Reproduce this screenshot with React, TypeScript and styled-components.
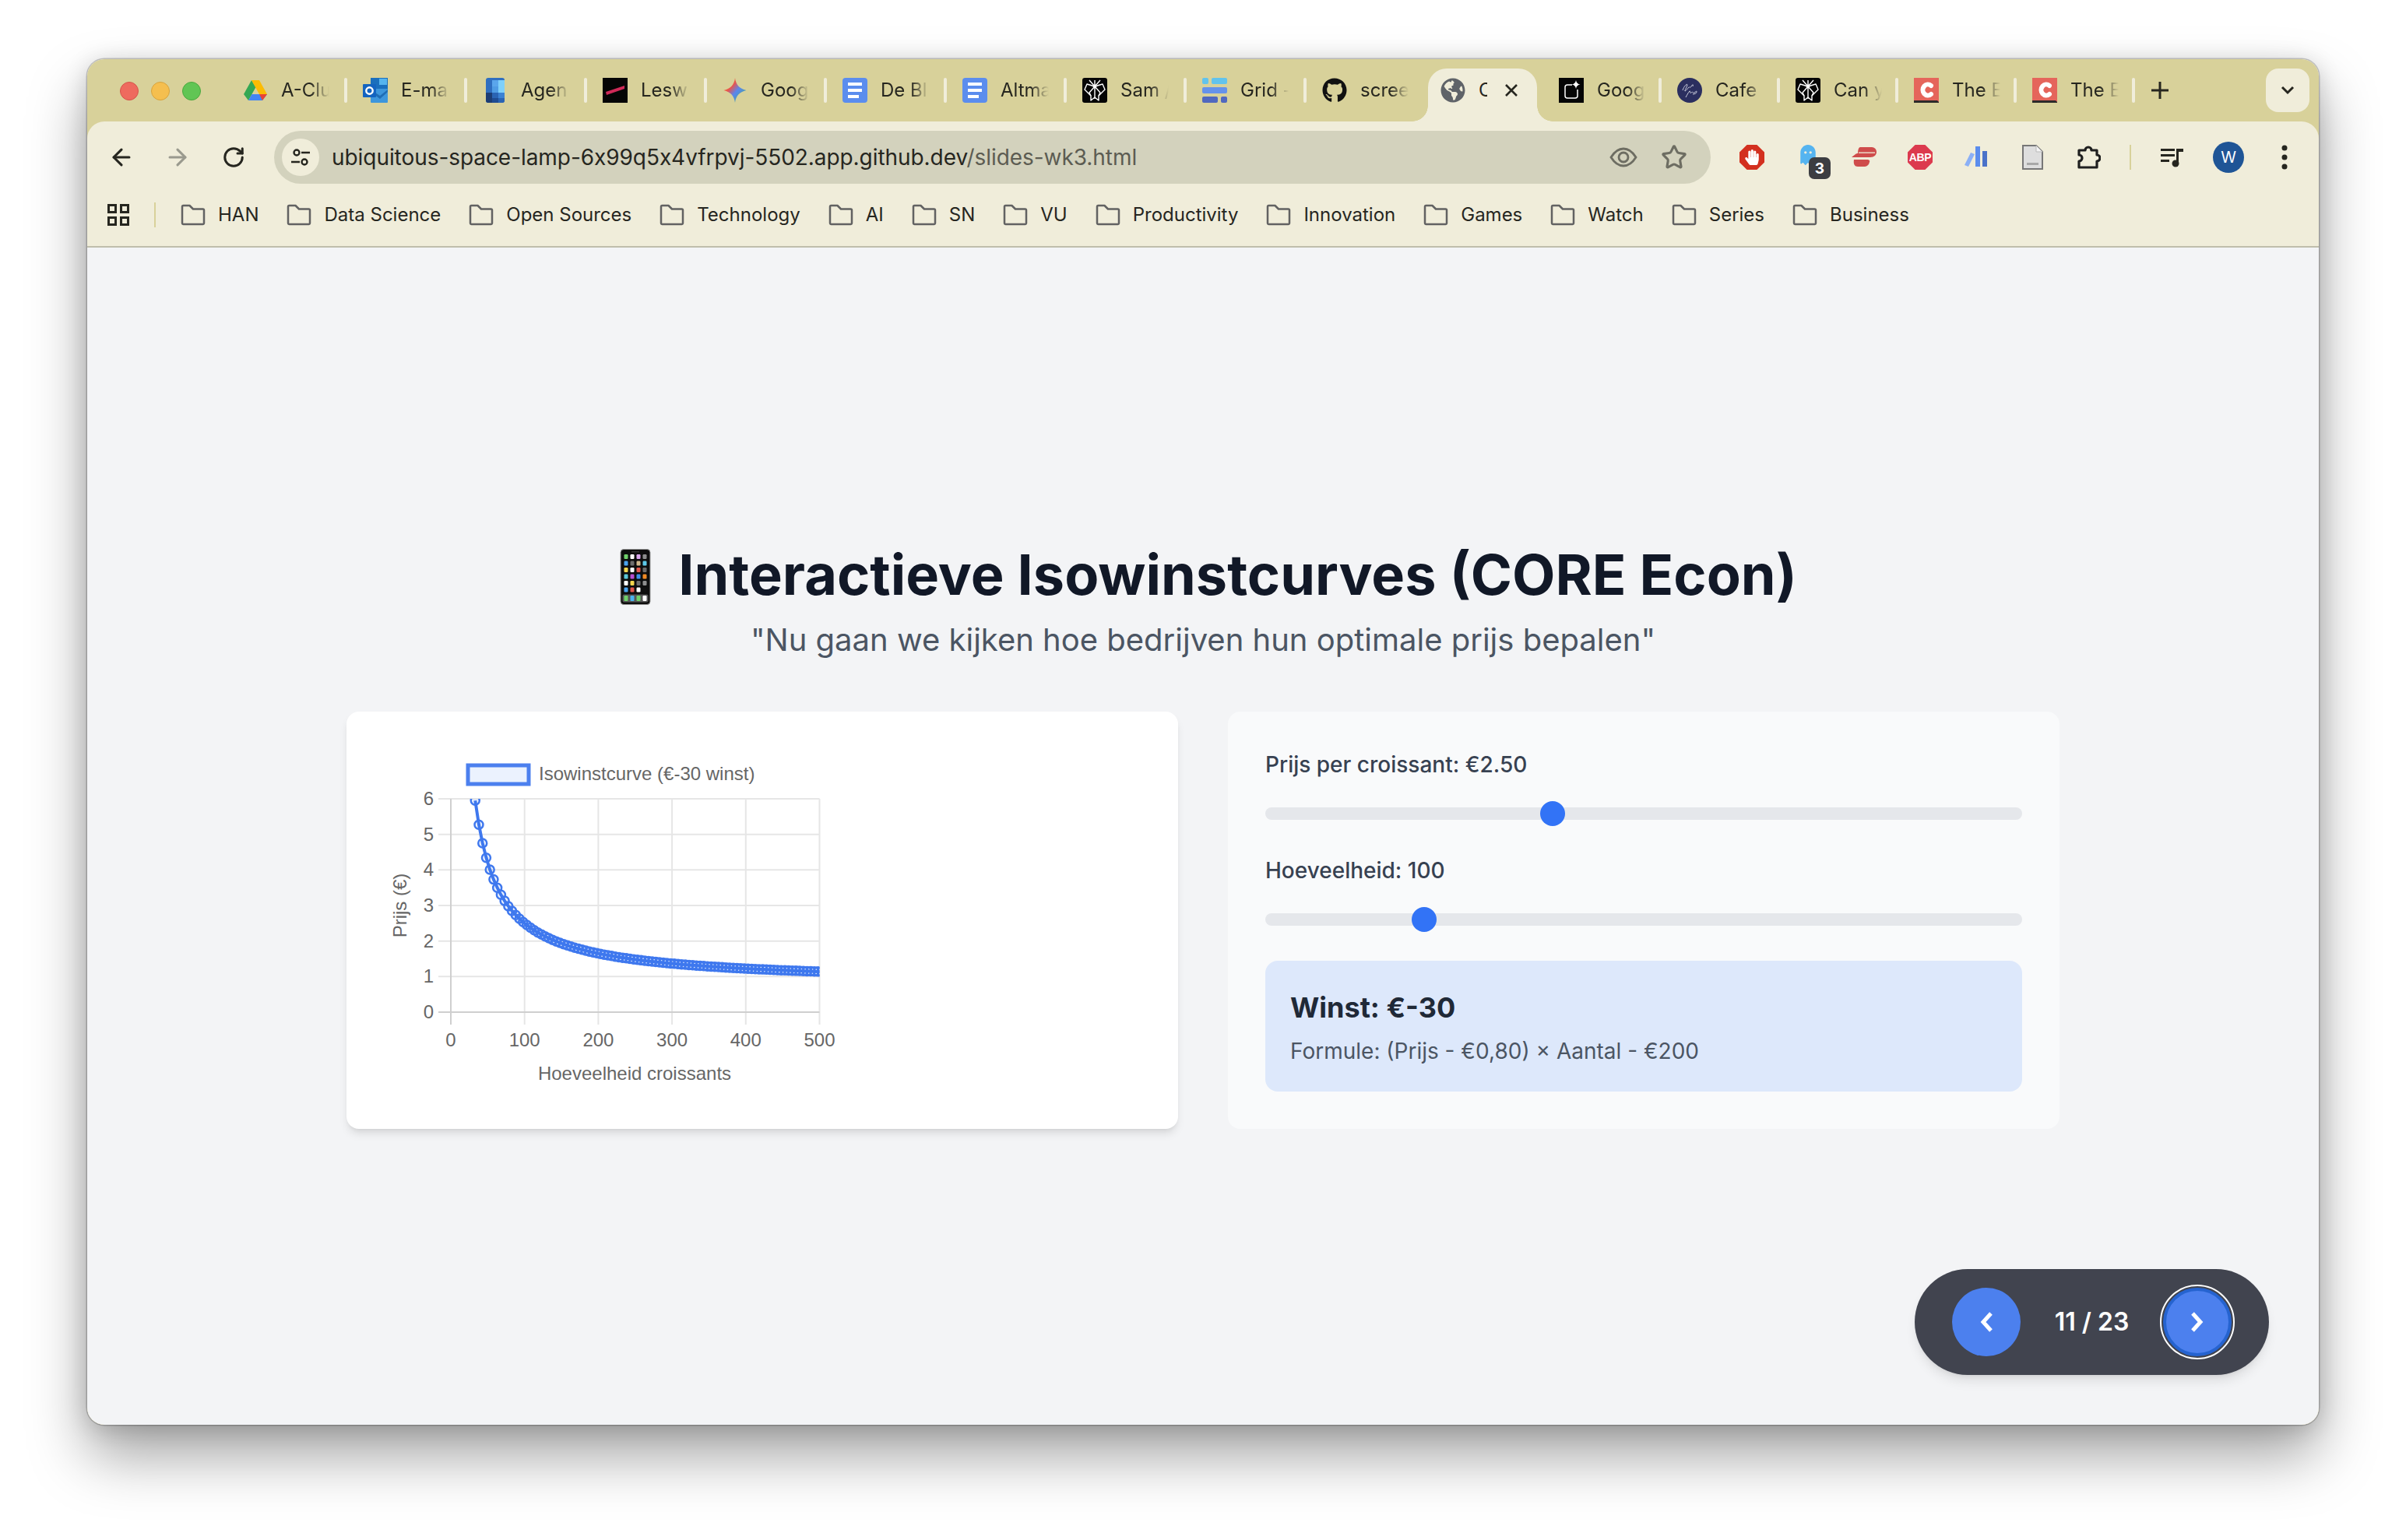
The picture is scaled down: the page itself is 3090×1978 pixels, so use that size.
import React from "react";
import styled, { createGlobalStyle } from "styled-components";
import { ArrowLeft, ArrowRight, RotateCw, Star } from "lucide-react";
import { FaGithub, FaGlobeAmericas, FaHandPaper, FaGhost } from "react-icons/fa";

const Global = createGlobalStyle`
  html, body { margin: 0; padding: 0; background: #fff; }
  body { width: 3090px; height: 1978px; overflow: hidden; font-family: Inter, "Liberation Sans", sans-serif; }
  * { box-sizing: border-box; }
`;

const Stage = styled.div`
  width: 3090px;
  height: 1978px;
  padding: 76px 112px 0 112px;
`;
const Window = styled.div`
  position: relative;
  height: 1754px;
  border-radius: 22px;
  background: #d8d19a;
  overflow: hidden;
`;
const WindowShadow = styled.div`
  height: 1754px;
  border-radius: 22px;
  box-shadow: 0 40px 75px rgba(0, 0, 0, 0.36), 0 4px 30px rgba(0, 0, 0, 0.16), 0 0 0 1.5px rgba(0, 0, 0, 0.2);
`;

const TabStrip = styled.div`
  display: flex;
  align-items: flex-start;
  height: 80px;
  padding-top: 12px;
`;
const Lights = styled.div`
  display: flex;
  align-items: center;
  gap: 16px;
  height: 58px;
  padding-left: 42px;
  width: 178px;
`;
const Light = styled.span<{ $c: string; $b: string }>`
  width: 24px;
  height: 24px;
  border-radius: 50%;
  background: ${(p) => p.$c};
  border: 1px solid ${(p) => p.$b};
`;
const Tab = styled.div<{ $w: number; $sep: boolean }>`
  position: relative;
  display: flex;
  align-items: center;
  gap: 17px;
  flex: none;
  width: ${(p) => p.$w}px;
  height: 56px;
  padding-left: 22px;
  ${(p) =>
    p.$sep
      ? `&::after { content: ""; position: absolute; right: -2px; top: 12px; width: 4px; height: 32px; border-radius: 2px; background: #f0edda; }`
      : ""}
`;
const ActiveTab = styled.div`
  position: relative;
  display: flex;
  align-items: center;
  flex: none;
  width: 140px;
  height: 68px;
  margin: 0 6px 0 4px;
  padding: 0 0 12px 16px;
  background: #f0edda;
  border-radius: 24px 24px 0 0;
  &::before, &::after {
    content: "";
    position: absolute;
    bottom: 0;
    width: 20px;
    height: 20px;
  }
  &::before { left: -20px; background: radial-gradient(circle at 0 0, transparent 19.5px, #f0edda 20px); }
  &::after { right: -20px; background: radial-gradient(circle at 100% 0, transparent 19.5px, #f0edda 20px); }
`;
const TabTitle = styled.span`
  display: block;
  width: 62px;
  font-size: 24px;
  line-height: 32px;
  color: #26261f;
  white-space: nowrap;
  overflow: hidden;
  -webkit-mask-image: linear-gradient(to right, #000 62%, transparent 100%);
  mask-image: linear-gradient(to right, #000 62%, transparent 100%);
`;
const ActiveTitle = styled(TabTitle)`
  width: 11px;
  margin-left: 17px;
  -webkit-mask-image: none;
  mask-image: none;
`;
const CloseMark = styled.svg`
  margin-left: 22px;
  flex: none;
`;
const Fav = styled.svg`
  width: 32px;
  height: 32px;
  flex: none;
  display: block;
`;
const NewTab = styled.svg`
  width: 28px;
  height: 28px;
  flex: none;
  margin: 14px 0 0 20px;
`;
const ListButton = styled.div`
  display: flex;
  align-items: center;
  justify-content: center;
  width: 56px;
  height: 56px;
  margin-left: auto;
  margin-right: 12px;
  border-radius: 16px;
  background: #f0edda;
`;

const Toolbar = styled.div`
  display: flex;
  align-items: flex-start;
  height: 80px;
  padding: 12px 8px 0 8px;
  background: #f0edda;
  border-radius: 22px 22px 0 0;
`;
const Slot = styled.div`
  position: relative;
  display: flex;
  align-items: center;
  justify-content: center;
  flex: none;
  width: 72px;
  height: 68px;
  color: #26261f;
`;
const DimSlot = styled(Slot)`
  color: #9a9a8e;
`;
const Omnibox = styled.div`
  display: flex;
  align-items: center;
  flex: none;
  width: 1845px;
  height: 68px;
  margin: 0 17px 0 16px;
  padding: 0 15px 0 10px;
  border-radius: 34px;
  background: #d3d2bd;
`;
const SiteIcon = styled.div`
  display: flex;
  align-items: center;
  justify-content: center;
  width: 48px;
  height: 48px;
  flex: none;
  margin-right: 16px;
  border-radius: 50%;
  background: #f0edda;
`;
const Url = styled.div`
  flex: 1;
  font-size: 28px;
  line-height: 36px;
  color: #26261f;
  white-space: nowrap;
  font-feature-settings: "calt" 0;
  letter-spacing: -0.06px;
`;
const UrlPath = styled.span`
  color: #5c5c52;
`;
const OmniAction = styled.div`
  display: flex;
  align-items: center;
  justify-content: center;
  width: 65px;
  color: #6d6d62;
`;
const Octagon = styled.div<{ $bg: string }>`
  display: flex;
  align-items: center;
  justify-content: center;
  width: 32px;
  height: 32px;
  background: ${(p) => p.$bg};
  clip-path: polygon(30% 0, 70% 0, 100% 30%, 100% 70%, 70% 100%, 30% 100%, 0 70%, 0 30%);
  color: #fff;
`;
const AbpText = styled.span`
  font-family: "Liberation Sans", sans-serif;
  font-weight: 700;
  font-size: 14px;
  line-height: 1;
  letter-spacing: -0.3px;
`;
const GhostIcon = styled.div`
  display: flex;
  color: #55b4f0;
  margin-top: -6px;
`;
const Badge = styled.span`
  position: absolute;
  left: 37px;
  top: 34px;
  display: flex;
  align-items: center;
  justify-content: center;
  width: 28px;
  height: 28px;
  border-radius: 7px;
  background: #3c3d41;
  color: #fff;
  font-size: 19px;
  font-weight: 700;
`;
const ToolDivider = styled.div`
  flex: none;
  width: 2px;
  height: 32px;
  margin: 18px 17px 0;
  background: #d8d19a;
`;
const Avatar = styled.div`
  display: flex;
  align-items: center;
  justify-content: center;
  width: 40px;
  height: 40px;
  border-radius: 50%;
  background: #1f5596;
  color: #fff;
  font-size: 20px;
`;

const BookmarkBar = styled.div`
  display: flex;
  align-items: center;
  height: 82px;
  padding: 0 0 0 26px;
  background: #f0edda;
  border-bottom: 2px solid #bfbeac;
`;
const BarDivider = styled.div`
  flex: none;
  width: 2px;
  height: 32px;
  margin: 0 32px;
  background: #d8d19a;
`;
const Bookmarks = styled.div`
  display: flex;
  align-items: center;
  gap: 36px;
`;
const Bookmark = styled.div`
  display: flex;
  align-items: center;
  gap: 16px;
  font-size: 24px;
  line-height: 32px;
  color: #26261f;
`;

const Main = styled.main`
  display: flex;
  flex-direction: column;
  align-items: center;
  justify-content: center;
  height: 1512px;
  background: #f3f4f6;
`;
const Title = styled.h1`
  margin: 0 0 16px;
  font-size: 72px;
  line-height: 80px;
  font-weight: 700;
  color: #111827;
  white-space: pre;
`;
const Phone = styled.svg`
  width: 72px;
  height: 72px;
  vertical-align: -13px;
`;
const Subtitle = styled.p`
  margin: 0 0 64px;
  font-size: 40px;
  line-height: 56px;
  color: #4b5563;
`;
const Columns = styled.div`
  display: grid;
  grid-template-columns: 1fr 1fr;
  gap: 64px;
  width: 2200px;
`;
const ChartCard = styled.section`
  height: 536px;
  padding: 48px;
  background: #fff;
  border-radius: 16px;
  box-shadow: 0 8px 12px -2px rgba(0, 0, 0, 0.1), 0 4px 6px -4px rgba(0, 0, 0, 0.1);
`;
const ChartSvg = styled.svg`
  display: block;
  width: 620px;
  height: 440px;
`;
const ChartLabel = styled.text`
  font-family: "Liberation Sans", Arial, sans-serif;
  font-size: 24px;
  fill: #666;
`;
const ControlCard = styled.section`
  height: 536px;
  padding: 48px;
  background: #f9fafb;
  border-radius: 16px;
`;
const FieldLabel = styled.label`
  display: block;
  margin-bottom: 27px;
  font-size: 28px;
  line-height: 40px;
  font-weight: 500;
  color: #374151;
`;
const Range = styled.input`
  display: block;
  width: 100%;
  height: 32px;
  margin: 0 0 37px;
  appearance: none;
  -webkit-appearance: none;
  background: transparent;
  &::-webkit-slider-runnable-track {
    height: 16px;
    border-radius: 8px;
    background: #e5e7eb;
  }
  &::-webkit-slider-thumb {
    -webkit-appearance: none;
    width: 32px;
    height: 32px;
    margin-top: -8px;
    border-radius: 50%;
    background: #3273f6;
  }
`;
const Result = styled.div`
  height: 168px;
  padding: 32px;
  border-radius: 16px;
  background: #dde8fb;
`;
const ResultValue = styled.div`
  margin-bottom: 8px;
  font-size: 36px;
  line-height: 56px;
  font-weight: 700;
  color: #1f2937;
`;
const ResultNote = styled.div`
  font-size: 28px;
  line-height: 40px;
  color: #4b5563;
`;

const Pager = styled.nav`
  position: absolute;
  right: 64px;
  bottom: 64px;
  display: flex;
  align-items: center;
  justify-content: space-between;
  width: 455px;
  height: 136px;
  padding: 0 48px;
  border-radius: 68px;
  background: #41444f;
  box-shadow: 0 10px 15px -3px rgba(0, 0, 0, 0.1), 0 4px 6px -4px rgba(0, 0, 0, 0.1);
`;
const PagerButton = styled.button<{ $focus?: boolean }>`
  display: flex;
  align-items: center;
  justify-content: center;
  width: 88px;
  height: 88px;
  padding: 0;
  border: ${(p) => (p.$focus ? "4px solid #2563d0" : "none")};
  border-radius: 50%;
  background: #4c80ee;
  ${(p) => (p.$focus ? "outline: 2px solid #fff; outline-offset: 2px;" : "")}
`;
const PagerCount = styled.span`
  font-size: 32px;
  line-height: 40px;
  font-weight: 600;
  color: #fff;
`;

/* favicons */
const Drive = () => (
  <Fav viewBox="0 0 32 32">
    <polygon points="11,3 16.5,12 7,29 1,21" fill="#34a853" />
    <polygon points="11,3 21,3 31,21 21,21" fill="#fbbc04" />
    <polygon points="7,29 11.5,21 31,21 25,29" fill="#4285f4" />
    <polygon points="31,21 25,29 21,21" fill="#ea4335" />
  </Fav>
);
const Outlook = () => (
  <Fav viewBox="0 0 32 32">
    <rect x="10" y="0" width="22" height="16" fill="#1a6fbd" />
    <rect x="21" y="1" width="10" height="8" fill="#55b4ee" />
    <rect x="10" y="14" width="22" height="18" rx="1" fill="#3d96dc" />
    <path d="M10 15l12 8 10-8v3L22 27 10 18z" fill="#1f6db5" />
    <rect x="0" y="8" width="17" height="17" rx="1" fill="#1464c0" />
    <circle cx="8.5" cy="16.5" r="4.2" fill="none" stroke="#fff" strokeWidth="2.4" />
  </Fav>
);
const Agenda = () => (
  <Fav viewBox="0 0 32 32">
    <rect x="4" y="0" width="24" height="32" rx="3" fill="#2f6fc0" />
    <rect x="12" y="3" width="16" height="8" fill="#5aa6ec" />
    <rect x="20" y="3" width="8" height="16" fill="#7fd0fa" />
    <rect x="12" y="11" width="8" height="8" fill="#4f9ce4" />
    <rect x="4" y="11" width="8" height="8" fill="#2f6fc0" />
    <rect x="12" y="19" width="8" height="7" fill="#2a64b4" />
    <rect x="20" y="19" width="8" height="7" fill="#3b82d4" />
    <path d="M4 19h8v13H7a3 3 0 0 1-3-3z" fill="#1d3d74" />
    <rect x="12" y="26" width="8" height="6" fill="#1f4c92" />
    <path d="M20 26h8v3a3 3 0 0 1-3 3h-5z" fill="#2a64b4" />
  </Fav>
);
const Lesw = () => (
  <Fav viewBox="0 0 32 32">
    <rect width="32" height="32" fill="#050505" />
    <polygon points="4,18 28,10 28,14 5,22" fill="#cf2a58" />
  </Fav>
);
const Gemini = () => (
  <Fav viewBox="0 0 32 32">
    <defs>
      <linearGradient id="gem" x1="0" y1="0" x2="1" y2="1">
        <stop offset="0" stopColor="#f4a33c" />
        <stop offset="0.35" stopColor="#e8554e" />
        <stop offset="0.55" stopColor="#5a86ee" />
        <stop offset="1" stopColor="#3fb56c" />
      </linearGradient>
    </defs>
    <path d="M16 0c1 8.500 5.500 14 14.500 16C21.500 18 17 23.500 16 32 15 23.500 10.500 18 1.500 16 10.500 14 15 8.500 16 0z" fill="url(#gem)" />
  </Fav>
);
const Docs = () => (
  <Fav viewBox="0 0 32 32">
    <rect width="32" height="32" rx="4" fill="#5b8dee" />
    <rect x="7" y="6" width="18" height="4" fill="#fff" />
    <rect x="7" y="14" width="18" height="4" fill="#fff" />
    <rect x="7" y="22" width="14" height="4" fill="#fff" />
  </Fav>
);
const Spider = () => (
  <Fav viewBox="0 0 32 32">
    <rect width="32" height="32" rx="3" fill="#050505" />
    <g fill="none" stroke="#fff" strokeWidth="1.400" strokeLinejoin="round">
      <path d="M6 8L16 11L26 8L29 15L21 23L21 29L16 25L11 29L11 23L3 15Z" />
      <path d="M16 3V27M16 11L9 3M16 11L23 3M16 11L9 19L11 23M16 11L23 19L21 23" />
    </g>
    <circle cx="16" cy="11" r="2.400" fill="#fff" />
  </Fav>
);
const GridLogo = () => (
  <Fav viewBox="0 0 32 32">
    <rect x="0" y="0" width="8" height="8" rx="2" fill="#62c3ec" />
    <rect x="12" y="0" width="20" height="8" rx="2" fill="#62c3ec" />
    <rect x="0" y="12" width="32" height="8" rx="2" fill="#6592ea" />
    <rect x="0" y="24" width="20" height="8" rx="2" fill="#5068bf" />
    <rect x="24" y="24" width="8" height="8" rx="2" fill="#5068bf" />
  </Fav>
);
const GoogBlack = () => (
  <Fav viewBox="0 0 32 32">
    <rect width="32" height="32" fill="#050505" />
    <path d="M17 9H11a3 3 0 0 0-3 3v11a3 3 0 0 0 3 3h10a3 3 0 0 0 3-3v-8" fill="none" stroke="#fff" strokeWidth="1.500" />
    <path d="M22 3c.6 3.400 2.200 5 5.500 5.500-3.300.5-4.900 2.100-5.500 5.500-.6-3.400-2.200-5-5.500-5.500 3.300-.5 4.900-2.100 5.500-5.500z" fill="#fff" />
  </Fav>
);
const CafeLogo = () => (
  <Fav viewBox="0 0 32 32">
    <circle cx="16" cy="16" r="16" fill="#2b2f5f" />
    <g fill="none" stroke="#d9dbe8" strokeWidth="0.900">
      <path d="M7 16c2-6 6-9 6-7s-4 8-3 8 4-4 5-5 1 2 3-1 3-3 2 0" />
      <path d="M11 25c2-4 4-7 5-8s0 4 2 2 2 1 4 0 3-3 3-1-3 3-5 3" />
    </g>
  </Fav>
);
const CLogo = () => (
  <Fav viewBox="0 0 32 32">
    <rect width="32" height="32" fill="#e5655b" />
    <path d="M0 29h30l2 2v1H0z" fill="#2c2a2a" />
    <path d="M22 10a6.500 7 0 1 0 0 11" fill="none" stroke="#fff" strokeWidth="6" strokeLinecap="round" />
  </Fav>
);
const Express = () => (
  <Fav viewBox="0 0 32 32">
    <path d="M11 3H26a6 6 0 0 1 6 6c0 4-3 7-8 7H0l5-4c1-1 2-1 3-1 0-4 1-8 3-8z" fill="#cf4c4b" />
    <path d="M3 19H20c2 0 4 1 3 3-1 4-3 6-8 6H8c-4 0-6-3-5-9z" fill="#cf4c4b" />
    <rect x="9" y="9.500" width="21" height="1.300" fill="#f0edda" />
  </Fav>
);
const Bars = () => (
  <Fav viewBox="0 0 32 32">
    <polygon points="9,10 14,12 6,28 1,26" fill="#8bb0f6" />
    <rect x="15" y="2" width="6" height="26" fill="#5b8ded" />
    <rect x="24" y="8" width="6" height="20" fill="#4a72c9" />
  </Fav>
);
const Page = () => (
  <Fav viewBox="0 0 32 32">
    <path d="M4 1h17l8 8v22H4z" fill="#dedede" stroke="#777" strokeWidth="2" />
    <path d="M21 1v8h8" fill="#f4f4f4" stroke="#b9b9b9" strokeWidth="1" />
    <rect x="9" y="23" width="15" height="3" fill="#a8a8a8" />
  </Fav>
);
const Puzzle = () => (
  <Fav viewBox="0 0 32 32">
    <path d="M4 7H12a4 4 0 0 1 8 0H27V13a4 4 0 0 1 0 8V29H4V21a4 4 0 0 0 0-8Z" fill="none" stroke="#1f1f1f" strokeWidth="3.200" strokeLinejoin="round" />
  </Fav>
);
const Playlist = () => (
  <Fav viewBox="0 0 32 32">
    <rect x="1" y="5" width="18" height="3" fill="#26261f" />
    <rect x="1" y="12" width="18" height="3" fill="#26261f" />
    <rect x="1" y="19" width="11" height="3" fill="#26261f" />
    <rect x="21" y="5" width="9" height="4" fill="#26261f" />
    <rect x="21" y="5" width="3" height="19" fill="#26261f" />
    <circle cx="20" cy="24" r="4.500" fill="#26261f" />
  </Fav>
);
const Folder = () => (
  <Fav viewBox="0 0 32 32">
    <path d="M2 5.500a1.500 1.500 0 0 1 1.500-1.500h8L16 8.500h12.500A1.500 1.500 0 0 1 30 10v16.500a1.500 1.500 0 0 1-1.500 1.500h-25A1.500 1.500 0 0 1 2 26.500z" fill="none" stroke="#626262" strokeWidth="2.500" strokeLinejoin="round" />
  </Fav>
);

const tabsLeft: [React.ReactNode, string, boolean][] = [
  [<Drive />, "A-Clu", true],
  [<Outlook />, "E-ma", true],
  [<Agenda />, "Agen", true],
  [<Lesw />, "Lesw", true],
  [<Gemini />, "Goog", true],
  [<Docs />, "De Bl", true],
  [<Docs />, "Altma", true],
  [<Spider />, "Sam /", true],
  [<GridLogo />, "Grid -", true],
  [<FaGithub size={32} color="#111" />, "scree", false],
];
const tabsRight: [React.ReactNode, string][] = [
  [<GoogBlack />, "Goog"],
  [<CafeLogo />, "Cafe"],
  [<Spider />, "Can y"],
  [<CLogo />, "The E"],
  [<CLogo />, "The E"],
];
const bookmarks = ["HAN", "Data Science", "Open Sources", "Technology", "AI", "SN", "VU", "Productivity", "Innovation", "Games", "Watch", "Series", "Business"];

const phoneRows = [
  ["#6fd06a", "#fff", "#d9a6ec", "#8d8d8d"],
  ["#4aa3ee", "#6d6d6d", "#cdb68c", "#5cc8e8"],
  ["#f5d64e", "#fff", "#e2574c", "#6d6d6d"],
  ["#5cc8d8", "#b84fd0", "#3f8fe8", "#f08a24"],
  ["#fff", "#f5d64e", "#6d6d6d", "#8d8d8d"],
  ["#4aa3ee", "#e2574c", "#fff", "#111"],
];
const dock = ["#6fd06a", "#4ab3ee", "#6fd06a", "#fff"];

const PhoneEmoji = () => (
  <Phone viewBox="0 0 72 72">
    <rect x="15" y="0.500" width="38" height="71" rx="4" fill="#0e0e0e" stroke="#9a9a9a" />
    <rect x="29" y="3" width="10" height="1.500" fill="#333" />
    {phoneRows.map((row, r) =>
      row.map((c, i) => <rect key={`${r}-${i}`} x={19.500 + i * 8} y={7 + r * 8.500} width="5" height="6" rx="1.200" fill={c} />)
    )}
    <rect x="17.500" y="58.500" width="33" height="10" rx="2" fill="#555" />
    {dock.map((c, i) => <rect key={c + i} x={19.500 + i * 8} y="60" width="5" height="7" rx="1.200" fill={c} />)}
  </Phone>
);

const X0 = 86;
const XU = 94.7;
const Y0 = 338;
const YU = 45.67;
const px = (q: number) => X0 + (q / 100) * XU;
const py = (p: number) => Y0 - p * YU;
const qs = Array.from({ length: 95 }, (_, i) => 33 + i * 5);
const profit = (q: number) => 0.8 + 170 / q;
const linePath = qs.map((q, i) => `${i ? "L" : "M"}${px(q).toFixed(1)} ${py(profit(q)).toFixed(1)}`).join(" ");

const Chart = () => (
  <ChartSvg viewBox="0 0 620 440">
    <defs>
      <clipPath id="plot">
        <rect x={X0} y={py(6)} width={XU * 5} height={YU * 6} />
      </clipPath>
    </defs>
    <rect x="108" y="21" width="78" height="24" fill="rgba(59,130,246,0.1)" stroke="#4c80ee" strokeWidth="5" />
    <ChartLabel x="199" y="40">Isowinstcurve (€-30 winst)</ChartLabel>
    {[1, 2, 3, 4, 5, 6].map((v) => (
      <line key={v} x1={X0 - 16} x2={X0 + XU * 5} y1={py(v)} y2={py(v)} stroke="#e6e6e6" strokeWidth="2" />
    ))}
    {[100, 200, 300, 400, 500].map((v) => (
      <line key={v} x1={px(v)} x2={px(v)} y1={py(6)} y2={Y0 + 16} stroke="#e6e6e6" strokeWidth="2" />
    ))}
    <line x1={X0 - 16} x2={X0 + XU * 5} y1={Y0} y2={Y0} stroke="#cfcfcf" strokeWidth="2" />
    <line x1={X0} x2={X0} y1={py(6)} y2={Y0 + 16} stroke="#cfcfcf" strokeWidth="2" />
    {[0, 1, 2, 3, 4, 5, 6].map((v) => (
      <ChartLabel key={v} x={X0 - 22} y={py(v) + 8} textAnchor="end">{v}</ChartLabel>
    ))}
    {[0, 100, 200, 300, 400, 500].map((v) => (
      <ChartLabel key={v} x={px(v)} y="382" textAnchor="middle">{v}</ChartLabel>
    ))}
    <ChartLabel x="322" y="425" textAnchor="middle">Hoeveelheid croissants</ChartLabel>
    <ChartLabel transform="translate(29 201) rotate(-90)" textAnchor="middle">Prijs (€)</ChartLabel>
    <g clipPath="url(#plot)">
      <path d={linePath} fill="none" stroke="#3f78ee" strokeWidth="4" />
      {qs.map((q) => (
        <circle key={q} cx={px(q)} cy={py(profit(q))} r="5.500" fill="rgba(59,130,246,0.1)" stroke="#3f78ee" strokeWidth="2.500" />
      ))}
    </g>
  </ChartSvg>
);

export default function App() {
  return (
    <Stage>
      <Global />
      <WindowShadow>
        <Window>
          <TabStrip>
            <Lights>
              <Light $c="#ee6a5e" $b="#d5544a" />
              <Light $c="#f5bf4f" $b="#d8a33c" />
              <Light $c="#61c554" $b="#4ba83f" />
            </Lights>
            {tabsLeft.map(([icon, label, sep], i) => (
              <Tab key={i} $w={154} $sep={sep}>
                {icon}
                <TabTitle>{label}</TabTitle>
              </Tab>
            ))}
            <ActiveTab>
              <FaGlobeAmericas size={32} color="#5f6368" />
              <ActiveTitle>C</ActiveTitle>
              <CloseMark width="18" height="18" viewBox="0 0 18 18">
                <path d="M2 2l14 14M16 2L2 16" stroke="#26261f" strokeWidth="2.600" />
              </CloseMark>
            </ActiveTab>
            {tabsRight.map(([icon, label], i) => (
              <Tab key={i} $w={152} $sep>
                {icon}
                <TabTitle>{label}</TabTitle>
              </Tab>
            ))}
            <NewTab viewBox="0 0 28 28">
              <path d="M14 3v22M3 14h22" stroke="#26261f" strokeWidth="3" />
            </NewTab>
            <ListButton>
              <svg width="20" height="14" viewBox="0 0 20 14">
                <path d="M3 3l7 7 7-7" fill="none" stroke="#26261f" strokeWidth="3" />
              </svg>
            </ListButton>
          </TabStrip>

          <Toolbar>
            <Slot><ArrowLeft size={34} strokeWidth={2.200} /></Slot>
            <DimSlot><ArrowRight size={34} strokeWidth={2.200} /></DimSlot>
            <Slot><RotateCw size={30} strokeWidth={2.400} /></Slot>
            <Omnibox>
              <SiteIcon>
                <svg width="28" height="28" viewBox="0 0 28 28">
                  <g fill="none" stroke="#26261f" strokeWidth="2.400">
                    <circle cx="9" cy="8" r="3.500" />
                    <path d="M15 8h11M2 20h11" />
                    <circle cx="19" cy="20" r="3.500" />
                  </g>
                </svg>
              </SiteIcon>
              <Url>
                ubiquitous-space-lamp-6x99q5x4vfrpvj-5502.app.github.dev<UrlPath>/slides-wk3.html</UrlPath>
              </Url>
              <OmniAction>
                <svg width="36" height="26" viewBox="0 0 36 26">
                  <path d="M2 13C7 5 12 2 18 2s11 3 16 11c-5 8-10 11-16 11S7 21 2 13z" fill="none" stroke="currentColor" strokeWidth="2.800" />
                  <circle cx="18" cy="13" r="6" fill="none" stroke="currentColor" strokeWidth="2.800" />
                </svg>
              </OmniAction>
              <OmniAction><Star size={34} strokeWidth={2.200} /></OmniAction>
            </Omnibox>
            <Slot><Octagon $bg="#d3301f"><FaHandPaper size={20} /></Octagon></Slot>
            <Slot>
              <GhostIcon><FaGhost size={26} /></GhostIcon>
              <Badge>3</Badge>
            </Slot>
            <Slot><Express /></Slot>
            <Slot><Octagon $bg="#dc3a4e"><AbpText>ABP</AbpText></Octagon></Slot>
            <Slot><Bars /></Slot>
            <Slot><Page /></Slot>
            <Slot><Puzzle /></Slot>
            <ToolDivider />
            <Slot><Playlist /></Slot>
            <Slot><Avatar>W</Avatar></Slot>
            <Slot>
              <svg width="8" height="32" viewBox="0 0 8 32">
                <circle cx="4" cy="4" r="3.500" fill="#26261f" />
                <circle cx="4" cy="16" r="3.500" fill="#26261f" />
                <circle cx="4" cy="28" r="3.500" fill="#26261f" />
              </svg>
            </Slot>
          </Toolbar>

          <BookmarkBar>
            <svg width="28" height="28" viewBox="0 0 28 28">
              <g fill="none" stroke="#26261f" strokeWidth="3">
                <rect x="1.500" y="1.500" width="9" height="9" />
                <rect x="17.500" y="1.500" width="9" height="9" />
                <rect x="1.500" y="17.500" width="9" height="9" />
                <rect x="17.500" y="17.500" width="9" height="9" />
              </g>
            </svg>
            <BarDivider />
            <Bookmarks>
              {bookmarks.map((b) => (
                <Bookmark key={b}><Folder />{b}</Bookmark>
              ))}
            </Bookmarks>
          </BookmarkBar>

          <Main>
            <Title><PhoneEmoji /> Interactieve Isowinstcurves (CORE Econ)</Title>
            <Subtitle>"Nu gaan we kijken hoe bedrijven hun optimale prijs bepalen"</Subtitle>
            <Columns>
              <ChartCard><Chart /></ChartCard>
              <ControlCard>
                <FieldLabel>Prijs per croissant: €2.50</FieldLabel>
                <Range type="range" min={1} max={5} step={0.1} defaultValue={2.5} />
                <FieldLabel>Hoeveelheid: 100</FieldLabel>
                <Range type="range" min={0} max={500} step={10} defaultValue={100} />
                <Result>
                  <ResultValue>Winst: €-30</ResultValue>
                  <ResultNote>Formule: (Prijs - €0,80) × Aantal - €200</ResultNote>
                </Result>
              </ControlCard>
            </Columns>
          </Main>

          <Pager>
            <PagerButton aria-label="Vorige">
              <svg width="18" height="26" viewBox="0 0 18 26">
                <path d="M15 2L5 13l10 11" fill="none" stroke="#fff" strokeWidth="5" />
              </svg>
            </PagerButton>
            <PagerCount>11 / 23</PagerCount>
            <PagerButton $focus aria-label="Volgende">
              <svg width="18" height="26" viewBox="0 0 18 26">
                <path d="M3 2l10 11L3 24" fill="none" stroke="#fff" strokeWidth="5" />
              </svg>
            </PagerButton>
          </Pager>
        </Window>
      </WindowShadow>
    </Stage>
  );
}
